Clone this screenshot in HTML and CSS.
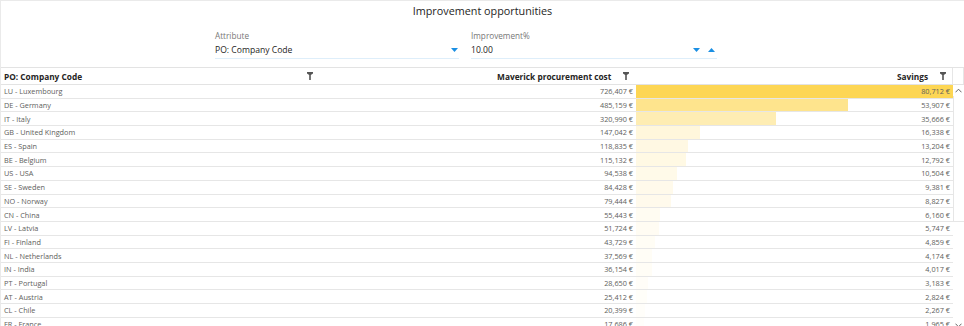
FILE: index.html
```html
<!DOCTYPE html>
<html lang="en">
<head>
    <meta charset="UTF-8">
    <meta name="viewport" content="width=device-width, initial-scale=1.0">
    <title>Improvement opportunities</title>
    <link rel="stylesheet" href="styles.css">
</head>
<body>
    <div class="panel">
        <h1 class="title">Improvement opportunities</h1>
        <div class="controls">
            <div class="field attr">
                <div class="label">Attribute</div>
                <div class="input">
                    <span class="value">PO: Company Code</span>
                    <svg class="tri" width="7" height="4" viewBox="0 0 7 4"><path d="M0 0h7L3.5 4z"/></svg>
                </div>
            </div>
            <div class="field pct">
                <div class="label">Improvement%</div>
                <div class="input">
                    <span class="value">10.00</span>
                    <svg class="tri" width="7" height="4" viewBox="0 0 7 4"><path d="M0 0h7L3.5 4z"/></svg>
                    <svg class="tri up" width="7" height="4" viewBox="0 0 7 4"><path d="M0 4h7L3.5 0z"/></svg>
                </div>
            </div>
        </div>

        <div class="table">
            <div class="row head">
                <div class="cell name">PO: Company Code
                    <svg class="filter" width="6" height="8" viewBox="0 0 6 8"><path d="M0 0h6v1.6L3.8 3v5H2.2V3L0 1.6z"/></svg>
                </div>
                <div class="cell num">Maverick procurement cost
                    <svg class="filter" width="6" height="8" viewBox="0 0 6 8"><path d="M0 0h6v1.6L3.8 3v5H2.2V3L0 1.6z"/></svg>
                </div>
                <div class="cell num">Savings
                    <svg class="filter" width="6" height="8" viewBox="0 0 6 8"><path d="M0 0h6v1.6L3.8 3v5H2.2V3L0 1.6z"/></svg>
                </div>
                <div class="cell gutter"></div>
            </div>

            <div class="body">
                <div class="rows">
                    <div class="row"><div class="cell name">LU - Luxembourg</div><div class="cell num">726,407 €</div><div class="cell num bar" style="--v:1"><span>80,712 €</span></div></div>
                    <div class="row"><div class="cell name">DE - Germany</div><div class="cell num">485,159 €</div><div class="cell num bar" style="--v:.6679"><span>53,907 €</span></div></div>
                    <div class="row"><div class="cell name">IT - Italy</div><div class="cell num">320,990 €</div><div class="cell num bar" style="--v:.4419"><span>35,666 €</span></div></div>
                    <div class="row"><div class="cell name">GB - United Kingdom</div><div class="cell num">147,042 €</div><div class="cell num bar" style="--v:.2024"><span>16,338 €</span></div></div>
                    <div class="row"><div class="cell name">ES - Spain</div><div class="cell num">118,835 €</div><div class="cell num bar" style="--v:.1636"><span>13,204 €</span></div></div>
                    <div class="row"><div class="cell name">BE - Belgium</div><div class="cell num">115,132 €</div><div class="cell num bar" style="--v:.1585"><span>12,792 €</span></div></div>
                    <div class="row"><div class="cell name">US - USA</div><div class="cell num">94,538 €</div><div class="cell num bar" style="--v:.1301"><span>10,504 €</span></div></div>
                    <div class="row"><div class="cell name">SE - Sweden</div><div class="cell num">84,428 €</div><div class="cell num bar" style="--v:.1162"><span>9,381 €</span></div></div>
                    <div class="row"><div class="cell name">NO - Norway</div><div class="cell num">79,444 €</div><div class="cell num bar" style="--v:.1094"><span>8,827 €</span></div></div>
                    <div class="row"><div class="cell name">CN - China</div><div class="cell num">55,443 €</div><div class="cell num bar" style="--v:.0763"><span>6,160 €</span></div></div>
                    <div class="row"><div class="cell name">LV - Latvia</div><div class="cell num">51,724 €</div><div class="cell num bar" style="--v:.0712"><span>5,747 €</span></div></div>
                    <div class="row"><div class="cell name">FI - Finland</div><div class="cell num">43,729 €</div><div class="cell num bar" style="--v:.0602"><span>4,859 €</span></div></div>
                    <div class="row"><div class="cell name">NL - Netherlands</div><div class="cell num">37,569 €</div><div class="cell num bar" style="--v:.0517"><span>4,174 €</span></div></div>
                    <div class="row"><div class="cell name">IN - India</div><div class="cell num">36,154 €</div><div class="cell num bar" style="--v:.0498"><span>4,017 €</span></div></div>
                    <div class="row"><div class="cell name">PT - Portugal</div><div class="cell num">28,650 €</div><div class="cell num bar" style="--v:.0394"><span>3,183 €</span></div></div>
                    <div class="row"><div class="cell name">AT - Austria</div><div class="cell num">25,412 €</div><div class="cell num bar" style="--v:.035"><span>2,824 €</span></div></div>
                    <div class="row"><div class="cell name">CL - Chile</div><div class="cell num">20,399 €</div><div class="cell num bar" style="--v:.0281"><span>2,267 €</span></div></div>
                    <div class="row"><div class="cell name">FR - France</div><div class="cell num">17,686 €</div><div class="cell num bar" style="--v:.0243"><span>1,965 €</span></div></div>
                </div>
                <div class="scroll">
                    <svg class="arrow" width="7" height="5" viewBox="0 0 7 5"><path d="M.5 4.3 3.5 1.2l3 3.1"/></svg>
                    <div class="thumb"></div>
                    <div class="track"></div>
                    <svg class="arrow" width="7" height="5" viewBox="0 0 7 5"><path d="M.5.7l3 3.1 3-3.1"/></svg>
                </div>
            </div>
        </div>
    </div>
</body>
</html>
```

FILE: styles.css
```css
html, body {
    margin: 0;
    padding: 0;
}
body {
    font-family: "Open Sans", "Noto Sans", sans-serif;
    background: white;
    color: #252423;
}

.panel {
    width: 964px;
    height: 326px;
    box-sizing: border-box;
    border-top: 1px solid #eaeaea;
    border-left: 1px solid #eaeaea;
    overflow: hidden;
}
.title {
    margin: 0;
    padding-top: 2px;
    height: 20px;
    font-size: 10.8px;
    font-weight: normal;
    text-align: center;
    color: #252423;
}

.controls {
    display: flex;
    padding-left: 214px;
    gap: 12px;
    height: 44px;
    padding-top: 7px;
    box-sizing: border-box;
}
.field {
    display: flex;
    flex-direction: column;
}
.field.attr {
    width: 244px;
}
.field.pct {
    width: 246px;
}
.label {
    font-size: 8.2px;
    color: #777;
    height: 12px;
    line-height: 12px;
}
.input {
    display: flex;
    align-items: center;
    height: 16px;
    border-bottom: 1.5px solid #deeefa;
    font-size: 8.6px;
    color: #252423;
}
.input .value {
    flex-grow: 1;
}
.tri {
    fill: #1a8fe3;
    margin-right: 1px;
}
.tri.up {
    margin-left: 7px;
    margin-right: 2px;
}

.table {
    border-top: 1px solid #e3e3e3;
}
.row {
    display: flex;
    height: 13.7px;
    box-sizing: border-box;
    border-bottom: 1px solid #e6e6e6;
    font-size: 7.3px;
    color: #605e5c;
}
.cell {
    display: flex;
    align-items: center;
    box-sizing: border-box;
}
.cell.name {
    width: 320px;
    padding-left: 3px;
}
.cell.num {
    justify-content: flex-end;
    padding-right: 3px;
}
.row .cell:nth-child(2) {
    width: 315px;
}
.row .cell:nth-child(3) {
    width: 317px;
}
.row.head {
    height: 17px;
    font-size: 8.3px;
    font-weight: bold;
    color: #252423;
    border-bottom: 1px solid #e3e3e3;
}
.head .cell.name {
    justify-content: space-between;
    padding-right: 8px;
}
.head .cell.num {
    padding-right: 6px;
}
.filter {
    fill: #555;
    margin-left: 12px;
}
.head .cell.name .filter {
    margin-left: 0;
}
.cell.gutter {
    width: 12px;
    border-left: 1px solid #e6e6e6;
    border-right: 1px solid #e6e6e6;
}

.body {
    display: flex;
}
.rows {
    width: 952px;
}
.bar {
    position: relative;
}
.bar::before {
    content: "";
    position: absolute;
    left: 0;
    top: 0;
    bottom: 0;
    width: calc(var(--v) * 100%);
    background: rgba(253, 214, 84, var(--v));
}
.bar span {
    position: relative;
}

.scroll {
    width: 12px;
    display: flex;
    flex-direction: column;
    align-items: center;
}
.arrow {
    fill: none;
    stroke: #555;
    stroke-width: 0.9;
    margin: 3px 0;
}
.thumb {
    align-self: stretch;
    height: 125px;
    border-left: 1px solid #e6e6e6;
    border-bottom: 1px solid #e6e6e6;
}
.track {
    flex-grow: 1;
}
```
